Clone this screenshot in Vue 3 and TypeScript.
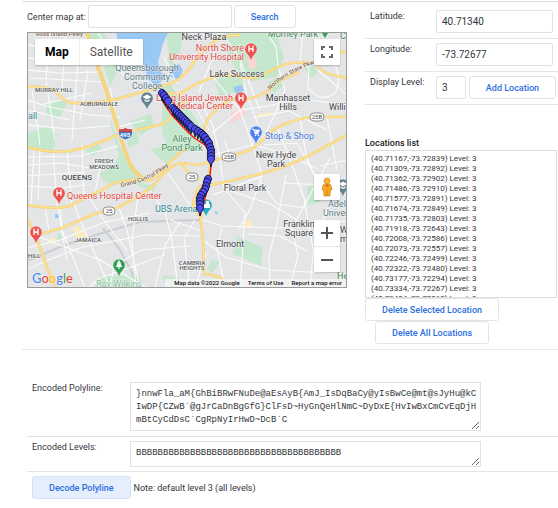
<script setup lang="ts">
import { ref } from 'vue'

interface MapLabel {
  text: string
  x: number
  y: number
  kind: string
  anchor?: 'start' | 'middle' | 'end'
}

const centerAt = ref('')
const latitude = ref('40.71340')
const longitude = ref('-73.72677')
const level = ref('3')
const selected = ref<string[]>([])
const encoded = ref(
  '}nnwFla_aM{GhBiBRwFNuDe@aEsAyB{AmJ_IsDqBaCy@yIsBwCe@mt@sJyHu@kCIwDP{CZwB`@gJrCaDnBgGfG}ClFsD~HyGnQeHlNmC~DyDxE{HvIwBxCmCvEqDjHmBtCyCdDsC`CgRpNyIrHwD~DcB`C',
)
const levels = ref('B'.repeat(38))

const locations = ref<string[]>([
  '40.71167,-73.72839',
  '40.71309,-73.72892',
  '40.71362,-73.72902',
  '40.71486,-73.72910',
  '40.71577,-73.72891',
  '40.71674,-73.72849',
  '40.71735,-73.72803',
  '40.71918,-73.72643',
  '40.72008,-73.72586',
  '40.72073,-73.72557',
  '40.72246,-73.72499',
  '40.72322,-73.72480',
  '40.73177,-73.72294',
  '40.73334,-73.72267',
  '40.73404,-73.72262',
])

function addLocation() {
  locations.value.push(`${latitude.value},${longitude.value}`)
}
function deleteSelected() {
  locations.value = locations.value.filter((l) => !selected.value.includes(l))
}
function deleteAll() {
  locations.value = []
}

const labels: MapLabel[] = [
  { text: 'Ross Island Pkwy', x: 36, y: 36, kind: 'road' },
  { text: 'Queensborough', x: 147, y: 71, kind: 'slate', anchor: 'middle' },
  { text: 'Community', x: 147, y: 80, kind: 'slate', anchor: 'middle' },
  { text: 'College', x: 147, y: 89, kind: 'slate', anchor: 'middle' },
  { text: 'MURRAY HILL', x: 54, y: 92, kind: 'area', anchor: 'middle' },
  { text: 'AUBURNDALE', x: 99, y: 106, kind: 'area', anchor: 'middle' },
  { text: 'all', x: 28, y: 119, kind: 'teal' },
  { text: 'Alley', x: 182, y: 142, kind: 'green', anchor: 'middle' },
  { text: 'Pond Park', x: 182, y: 151, kind: 'green', anchor: 'middle' },
  { text: 'Neck Plaza', x: 204, y: 40, kind: 'town', anchor: 'middle' },
  { text: 'North Shore', x: 244, y: 51, kind: 'red', anchor: 'end' },
  { text: 'University Hospital', x: 244, y: 60, kind: 'red', anchor: 'end' },
  { text: 'Lake Success', x: 237, y: 77, kind: 'town', anchor: 'middle' },
  { text: 'Morney Park', x: 293, y: 37, kind: 'green', anchor: 'middle' },
  { text: 'C', x: 340, y: 39, kind: 'green' },
  { text: 'Long Island Jewish', x: 233, y: 101, kind: 'red', anchor: 'end' },
  { text: 'Medical Center', x: 233, y: 109, kind: 'red', anchor: 'end' },
  { text: 'Manhasset', x: 288, y: 101, kind: 'town', anchor: 'middle' },
  { text: 'Hills', x: 288, y: 110, kind: 'town', anchor: 'middle' },
  { text: 'Willi', x: 329, y: 110, kind: 'town' },
  { text: 'Stop & Shop', x: 265, y: 139, kind: 'blue' },
  { text: 'FRESH', x: 104, y: 163, kind: 'area', anchor: 'middle' },
  { text: 'MEADOWS', x: 104, y: 169, kind: 'area', anchor: 'middle' },
  { text: 'QUEENS', x: 77, y: 180, kind: 'borough', anchor: 'middle' },
  { text: 'Queens Hospital Center', x: 67, y: 199, kind: 'red' },
  { text: 'HOLLIS', x: 138, y: 221, kind: 'area', anchor: 'middle' },
  { text: 'JAMAICA', x: 88, y: 242, kind: 'area', anchor: 'middle' },
  { text: 'UBS Arena', x: 155, y: 212, kind: 'teal' },
  { text: 'HILL', x: 28, y: 258, kind: 'area' },
  { text: 'CAMBRIA', x: 192, y: 265, kind: 'area', anchor: 'middle' },
  { text: 'HEIGHTS', x: 192, y: 270, kind: 'area', anchor: 'middle' },
  { text: 'Roy Wilkins', x: 119, y: 287, kind: 'faint', anchor: 'middle' },
  { text: 'New Hyde', x: 276, y: 158, kind: 'town', anchor: 'middle' },
  { text: 'Park', x: 276, y: 167, kind: 'town', anchor: 'middle' },
  { text: 'Floral Park', x: 245, y: 191, kind: 'town', anchor: 'middle' },
  { text: 'Franklin', x: 299, y: 227, kind: 'town', anchor: 'middle' },
  { text: 'Square', x: 299, y: 236, kind: 'town', anchor: 'middle' },
  { text: 'Elmont', x: 230, y: 247, kind: 'town', anchor: 'middle' },
  { text: 'Adelphi', x: 328, y: 207, kind: 'slate' },
  { text: 'University', x: 323, y: 216, kind: 'slate' },
  { text: 'West', x: 340, y: 233, kind: 'town' },
  { text: 'mpstead', x: 340, y: 242, kind: 'town' },
  { text: 'He', x: 337, y: 279, kind: 'green' },
]

const highways = [
  'M27 87 Q43 86 54 90 Q61 99 70 103 Q95 104 117 99 L160 87 Q172 84 179 79 Q188 72 194 62 Q202 50 214 42 Q223 35 240 35',
  'M27 147 Q48 153 70 151 Q92 147 117 135 Q138 129 160 125 Q170 121 176 110 L190 98',
  'M166 93 L180 94 Q192 85 204 81 Q218 73 234 76 Q250 80 262 76 Q278 65 292 63 L314 62 Q330 58 347 50',
  'M204 130 Q206 118 214 112 Q226 98 240 99 Q254 99 262 94 Q272 90 276 82 L300 72',
  'M347 78 Q322 74 318 66',
  'M211 161 L229 157 L250 150 Q260 144 270 132 Q286 121 310 117 L347 117',
  'M210 185 L230 181 L260 174 Q290 166 310 155 L347 135',
  'M27 205 Q57 210 70 206 Q88 196 100 191 L112 184 Q130 178 150 180 Q162 174 170 162 L184 149',
  'M36 235 L62 228 L94 214 L117 208 L130 201 Q150 191 160 178 Q169 166 180 163 L200 165 L211 161',
  'M180 163 L190 174 L200 180',
  'M27 218 L38 242 L48 270 L56 288',
  'M200 214 L203 240 L204 274 Q218 274 230 285',
  'M211 160 L208 180 L197 190 L193 205 L200 217',
]

const expressway = 'M87 32 L95 59 L107 92 L119 132 Q125 152 130 164 Q137 176 147 181'

const streets = [
  'M27 45 L75 50 L110 57 M50 32 L46 80 L55 140 M66 32 L62 90 M27 70 L60 73 L100 72 M27 100 L50 107 L90 115 L120 117 M32 90 L40 145 M78 60 L72 140 M88 70 L80 120 M27 125 L70 129 L110 126 M27 58 L100 64 M44 104 L92 93 M98 32 L112 59 L127 80 M110 88 L118 127 L145 120 M102 66 L140 60 M30 78 L105 82 M27 110 L70 120',
  'M27 165 L60 163 L90 168 L120 166 M40 150 L38 200 M53 151 L57 204 L67 260 M67 150 L72 205 M82 145 L84 200 M27 186 L60 188 L85 185 M100 168 L94 197 M27 176 L85 172 M118 205 L127 230 L140 288 M138 197 L132 240 L136 288 M150 190 L165 212 L172 240 L178 288 M168 173 L190 205 M27 157 L80 156 L118 146 M34 150 L31 205',
  'M27 232 L60 245 L100 260 L147 288 M45 205 L49 232 M60 207 L62 230 L85 288 M74 203 L80 220 L110 288 M90 198 L100 215 L128 252 M27 270 L45 261 L83 247 L145 235 L200 236 M110 288 L114 266 L141 250 L190 246 M88 288 L100 278 L165 255 M155 288 L165 245 L181 221 M27 248 L60 240 L105 222 L150 213',
  'M200 100 L213 126 L219 154 L224 188 L245 213 L240 288 M212 76 L240 110 L254 149 L262 176 L251 207 L239 230 M240 63 L247 96 L258 124 M214 55 L199 92 M176 92 L194 105 L209 130 M164 57 L177 84',
  'M212 133 L240 110 L268 106 L300 99 L347 105 M277 127 L288 154 L304 198 L314 255 M300 118 L306 155 L316 180 M266 32 L276 47 L278 66 L285 90 L276 112 L262 140 M303 32 L300 63 M309 65 L308 88 Q320 103 334 94 Q343 83 334 62 M227 40 L240 60 L260 110',
  'M200 219 L222 226 L276 228 L347 221 M203 240 L225 257 L270 270 L347 274 M228 190 L270 204 L297 220 M258 178 L277 204 L306 208 M270 288 L269 255 L276 229 L286 175 M290 288 L298 255 L292 228 L330 158 M310 288 L314 245 L330 202 L347 180 M206 253 L195 288 M248 234 L280 236 L307 251 M222 226 L217 249 L225 288',
  'M253 118 L289 111 L327 130 M264 145 L297 143 L318 181 M216 154 L252 145 L281 152 L318 169 M318 70 L347 95 M327 117 L337 170 M195 220 L184 238 L190 288 M170 220 L202 231 M213 195 L262 176 M225 140 L229 155 M320 166 L347 160 M284 183 L347 186',
]

const hospitals = [
  { x: 251, y: 49 },
  { x: 241, y: 98 },
  { x: 59, y: 193 },
  { x: 36, y: 232 },
]

const shields = [
  { text: '25B', x: 317, y: 117 },
  { text: '25B', x: 229, y: 157 },
  { text: '25', x: 192, y: 177 },
  { text: '25', x: 109, y: 211 },
]

const pins: [number, number][] = [
  [162, 93], [164, 95], [166, 98], [168, 101], [173, 108], [175, 110], [177, 112],
  [179, 114], [181, 116], [183, 118], [185, 120], [187, 122], [189, 124], [191, 126],
  [195, 129], [198, 131], [201, 133], [203, 135], [205, 137], [207, 140], [209, 143],
  [210, 147], [211, 150], [211, 153], [211, 156], [211, 159], [208, 179], [207, 182],
  [206, 186], [205, 189], [203, 192], [201, 195], [200, 198], [200, 201], [200, 204], [200, 208],
]
</script>

<template>
  <main class="page">
    <section class="editor">
      <div class="map-side">
        <form class="center-row" @submit.prevent>
          <label for="center">Center map at:</label>
          <input id="center" v-model="centerAt" class="field" type="text" />
          <button class="btn search" type="submit">Search</button>
        </form>

        <div class="map">
          <svg class="canvas" viewBox="28 33 318 254" preserveAspectRatio="xMidYMid slice" role="img" aria-label="Map">
            <rect x="27" y="32" width="321" height="257" fill="#e4e5e6" />
            <g fill="#c4e7cd">
              <path d="M83 32h20l12 20 3 18-8 16-9-28zM166 32h17l-2 18-8 10-5-10zM226 32h50l8 25-7 20-25 4-17-13-8-17zM162 88l8-6 8 15 13 14 8 14 10 13-8 8-14 6-17-1-8-18zM214 80l20-6 12 7-10 11-16 4zM111 119l4 15 12 29 18 22 12-1-5 9-20-11-26 1-7-10 14-6 6-12-8-29zM268 82l13-6 4 8-11 10zM27 134l20-8 10 8-4 17-26-4z" />
              <path d="M237 236l26 12-2 18-28-12zM307 186l13-1v17l-12 3zM46 105l16-6 5 5-8 14-12-1zM85 150l14-6 3 6-10 6zM130 121l21-7 3 13-14 8zM57 233l6 1v6l-6 1zM99 276l41-1 2 12H99zM212 260l8 1-7 12-6-4zM163 276l17 1-4 6-12-1zM304 68l10-3 4 8-8 5zM150 149l24-5 9 7-17 13zM124 132l12-3 3 13-10 6z" />
            </g>
            <g fill="#9ac8f5">
              <path d="M116 32h52l-5 12-5 18 6 17-8 7-8-7-4-14-14-8-11-10z" />
              <path d="M171 69l8-5 4 6-5 11-8-5zM233 87l9-2 2 6-8 3zM55 214h4v4h-4zM214 211l4 1-2 3z" />
            </g>
            <path d="M173 32l5 8-8 19 3 8" fill="none" stroke="#c4e7cd" stroke-width="4" />
            <g fill="#f9d5d3">
              <path d="M247 57l8 1 2 8-7 4zM231 113l12-5 3 6-15 10z" />
            </g>
            <g fill="#faebc0">
              <circle cx="249" cy="224" r="4" />
              <path d="M72 228l5-3 8 8 4 9-10 2zM257 114l16-2v3l-15 2zM50 237l5 1 1 6-6-1z" />
            </g>
            <path d="M27 261L65 245 105 232 140 222 200 220M103 228l17 22 20 38" fill="none" stroke="#cbcdd0" stroke-width="2" />
            <g class="streets"><path v-for="(d, i) in streets" :key="i" :d="d" /></g>
            <g class="road-edge">
              <path v-for="(d, i) in highways" :key="i" :d="d" />
              <path class="wide" :d="expressway" />
            </g>
            <g class="road-fill">
              <path v-for="(d, i) in highways" :key="i" :d="d" />
              <path class="wide" :d="expressway" />
            </g>

            <path id="grand-central" d="M121 187 Q152 182 174 161" fill="none" />
            <path id="northern-state" d="M270 90 Q286 73 322 61" fill="none" />
            <text class="road"><textPath href="#grand-central">Grand Central Pkwy</textPath></text>
            <text class="road"><textPath href="#northern-state">Northern State Pkwy</textPath></text>

            <text
              v-for="l in labels"
              :key="l.text + l.y"
              :x="l.x"
              :y="l.y"
              :text-anchor="l.anchor ?? 'start'"
              :class="l.kind"
            >{{ l.text }}</text>

            <g v-for="s in shields" :key="s.x">
              <rect :x="s.x - (s.text.length > 2 ? 7 : 6)" :y="s.y - 4" :width="s.text.length > 2 ? 14 : 12" height="8" rx="4" fill="#fff" stroke="#777" stroke-width=".8" />
              <text :x="s.x" :y="s.y + 2" text-anchor="middle" class="shield">{{ s.text }}</text>
            </g>
            <g>
              <path d="M119 129q3 1 6.500-1 3.500 2 6.500 1 3 8-6.500 11-9.500-3-6.500-11z" fill="#3f74c7" stroke="#fff" stroke-width=".7" />
              <path d="M119 129q3 1 6.500-1 3.500 2 6.500 1v3h-13z" fill="#d2454b" />
              <text x="125" y="137" text-anchor="middle" class="interstate">495</text>
            </g>

            <g v-for="h in hospitals" :key="h.x" :transform="`translate(${h.x} ${h.y})`">
              <path class="drop" d="M0 12Q-1 8-4 5A6.200 6.200 0 1 1 4 5Q1 8 0 12z" fill="#ea5350" />
              <path d="M-2-3.500V3M2-3.500V3M-2 0H2" fill="none" stroke="#fff" stroke-width="1.300" />
            </g>
            <g transform="translate(256 132)">
              <path class="drop" d="M0 13Q-1 8-4 5A6.200 6.200 0 1 1 4 5Q1 8 0 13z" fill="#4a80f0" />
              <path d="M-4-3h1.500l1.500 5h4M-2-2h5.500l-1 2.500h-4" fill="#fff" stroke="#fff" stroke-width=".8" />
              <circle cx="-.5" cy="3.500" r=".8" fill="#fff" /><circle cx="2.500" cy="3.500" r=".8" fill="#fff" />
            </g>
            <g v-for="c in [{ x: 147, y: 98 }, { x: 343, y: 185 }]" :key="c.x" :transform="`translate(${c.x} ${c.y})`">
              <path class="drop" d="M0 12Q-1 8-4 5A6.200 6.200 0 1 1 4 5Q1 8 0 12z" fill="#63808f" />
              <path d="M-4.500-1L0-3.500 4.500-1 0 1.500zM-2.500 1.300L0 2.700l2.500-1.400V3L0 4-2.500 3z" fill="#fff" />
            </g>
            <g transform="translate(119 265)">
              <path class="drop" d="M0 12Q-1 8-4 5A6.200 6.200 0 1 1 4 5Q1 8 0 12z" fill="#32a053" />
              <path d="M0-5L2.200-1.500H1.400L3.200 2H.6V4H-.6V2H-3.200L-1.400-1.500H-2.200z" fill="#fff" />
            </g>
            <path d="M325 38l-3-5h6z" fill="#32a053" />
            <g transform="translate(206 205)">
              <path class="drop" d="M0 12Q-1 8-4 5A6.200 6.200 0 1 1 4 5Q1 8 0 12z" fill="#27a9bd" />
              <path d="M-2-1H4V3H-2zM0-4H3V-1H0z" fill="#fff" />
            </g>

            <path d="M162 100L167 108 172 115 183 127 193 137 205 145 209 151 211 166 209 184 205 198 200 216" fill="none" stroke="#f01c12" stroke-width="1.500" />
            <g v-for="(p, i) in pins" :key="i" :transform="`translate(${p[0]} ${p[1]})`">
              <path d="M0 8Q-.5 4-2.500 2.500A3.600 3.600 0 1 1 2.500 2.500Q.5 4 0 8z" fill="#4b4bf2" stroke="#101030" stroke-width=".9" />
            </g>
            <rect x="165" y="279" width="183" height="9" fill="#f5f5f5" opacity=".75" />
          </svg>

          <div class="map-types">
            <button class="map-type active" type="button">Map</button>
            <button class="map-type" type="button">Satellite</button>
          </div>
          <button class="tile fullscreen" type="button" aria-label="Fullscreen">
            <svg viewBox="0 0 12 12" width="12" height="12"><path d="M1 4V1H4M8 1H11V4M11 8V11H8M4 11H1V8" fill="none" stroke="#666" stroke-width="2" /></svg>
          </button>
          <button class="tile pegman" type="button" aria-label="Street View">
            <svg viewBox="0 0 14 20" width="14" height="20">
              <path d="M3 8Q7 6 11 8L12 13H10.500L10 19H4L3.500 13H2z" fill="#f5a623" stroke="#c98214" stroke-width=".6" />
              <path d="M5 8L7 10 9 8" fill="#e0552c" />
              <path d="M7 13V19" stroke="#c98214" stroke-width=".8" />
              <circle cx="7" cy="4" r="3" fill="#f9b233" stroke="#c98214" stroke-width=".6" />
            </svg>
          </button>
          <div class="zoom">
            <button type="button" aria-label="Zoom in"><svg viewBox="0 0 12 12" width="12" height="12"><path d="M0 6H12M6 0V12" stroke="#555" stroke-width="2" /></svg></button>
            <button type="button" aria-label="Zoom out"><svg viewBox="0 0 12 12" width="12" height="12"><path d="M0 6H12" stroke="#555" stroke-width="2" /></svg></button>
          </div>
          <a class="logo" href="#"><span class="b">G</span><span class="r">o</span><span class="y">o</span><span class="b">g</span><span class="g">l</span><span class="r">e</span></a>
          <div class="credits">
            <span>Map data ©2022 Google</span>
            <a href="#">Terms of Use</a>
            <a href="#">Report a map error</a>
          </div>
        </div>
      </div>

      <div class="point-side">
        <form @submit.prevent="addLocation">
          <div class="point-row">
            <label for="lat">Latitude:</label>
            <input id="lat" v-model="latitude" class="field" type="text" />
          </div>
          <div class="point-row">
            <label for="lng">Longitude:</label>
            <input id="lng" v-model="longitude" class="field" type="text" />
          </div>
          <div class="point-row">
            <label for="level">Display Level:</label>
            <div class="level-group">
              <input id="level" v-model="level" class="field level" type="text" />
              <button class="btn add" type="submit">Add Location</button>
            </div>
          </div>
        </form>

        <label class="list-title" for="list">Locations list</label>
        <select id="list" v-model="selected" class="list" multiple>
          <option v-for="(l, i) in locations" :key="i" :value="l">({{ l }}) Level: 3</option>
        </select>
        <div class="list-actions">
          <button class="btn" type="button" @click="deleteSelected">Delete Selected Location</button>
          <button class="btn all" type="button" @click="deleteAll">Delete All Locations</button>
        </div>
      </div>
    </section>

    <section class="encoding">
      <div class="code-row">
        <label for="polyline">Encoded Polyline:</label>
        <textarea id="polyline" v-model="encoded" class="code tall" spellcheck="false"></textarea>
      </div>
      <div class="code-row">
        <label for="levels">Encoded Levels:</label>
        <textarea id="levels" v-model="levels" class="code" spellcheck="false"></textarea>
      </div>
      <div class="decode-row">
        <button class="btn primary" type="button">Decode Polyline</button>
        <span>Note: default level 3 (all levels)</span>
      </div>
    </section>
  </main>
</template>

<style>
body {
  background: #fff;
}
</style>

<style scoped>
.page,
.page * {
  box-sizing: border-box;
}
.page {
  padding: 1px 0 0 22px;
  font: 9px/12px Roboto, 'Liberation Sans', sans-serif;
  color: #33363a;
}
.editor {
  display: grid;
  grid-template-columns: 338fr 193fr;
  padding-left: 5px;
  padding-bottom: 5px;
  border-top: 1px solid #dcdee0;
  border-bottom: 1px solid #e4e6e8;
}
.map-side {
  padding: 3px 18px 0 0;
}
.center-row {
  display: flex;
  align-items: center;
  gap: 2px;
  margin-bottom: 4px;
}
.field {
  height: 23px;
  min-width: 0;
  margin: 0;
  padding: 0 5px;
  border: 1px solid #dfe1e5;
  border-radius: 2px;
  background: #fff;
  color: #33363a;
  font: 10px/12px Roboto, 'Liberation Sans', sans-serif;
}
.center-row .field {
  width: 45%;
}
.btn {
  height: 23px;
  padding: 0 16px;
  border: 1px solid #e2e4e8;
  border-radius: 3px;
  background: #fff;
  color: #2b6fdf;
  font: 500 9px/12px Roboto, 'Liberation Sans', sans-serif;
  white-space: nowrap;
}
.map {
  position: relative;
  aspect-ratio: 320 / 256;
  overflow: hidden;
  border: 1px solid #9a9a9a;
}
.canvas {
  display: block;
  width: 100%;
  height: 100%;
}
.canvas text {
  font: 9px Roboto, 'Liberation Sans', sans-serif;
  paint-order: stroke;
  stroke: rgba(255, 255, 255, 0.7);
  stroke-width: 1px;
  stroke-linejoin: round;
}
.streets path {
  fill: none;
  stroke: #fcfcfc;
  stroke-width: 1.1px;
}
.road-edge path {
  fill: none;
  stroke: #f5cb6c;
  stroke-width: 2.6px;
}
.road-edge .wide {
  stroke-width: 3.6px;
}
.road-fill path {
  fill: none;
  stroke: #fde293;
  stroke-width: 1.6px;
}
.road-fill .wide {
  stroke: #f9d67b;
  stroke-width: 2.4px;
}
.drop {
  stroke: #fff;
  stroke-width: 0.5px;
}
.canvas .town { fill: #3c4043; }
.canvas .slate { fill: #5d7886; }
.canvas .red { fill: #df4340; }
.canvas .green { fill: #37874f; }
.canvas .faint { fill: #8cba9b; }
.canvas .blue { fill: #4577dc; }
.canvas .teal { fill: #2a8793; }
.canvas .area { fill: #55595d; font-size: 6px; font-weight: 500; }
.canvas .borough { fill: #45494d; font-size: 8px; font-weight: 500; }
.canvas .road { fill: #7d6148; font-size: 6px; font-weight: 500; }
.canvas .shield { fill: #444; font-size: 6px; stroke: none; }
.canvas .interstate { fill: #fff; font-size: 6px; font-weight: 700; stroke: none; }

.map-types {
  position: absolute;
  top: 6px;
  left: 7px;
  display: flex;
  background: #fff;
  border-radius: 1px;
  box-shadow: 0 1px 2px rgba(0, 0, 0, 0.25);
}
.map-type {
  height: 26px;
  padding: 0 10px;
  border: 0;
  background: none;
  color: #565656;
  font: 12px/14px Roboto, 'Liberation Sans', sans-serif;
}
.map-type + .map-type {
  border-left: 1px solid #ececec;
}
.map-type.active {
  color: #000;
  font-weight: 700;
}
.tile,
.zoom {
  position: absolute;
  right: 6px;
  width: 26px;
  background: #fff;
  border: 0;
  border-radius: 1px;
  box-shadow: 0 1px 2px rgba(0, 0, 0, 0.25);
}
.tile {
  display: grid;
  place-items: center;
  height: 26px;
  padding: 0;
}
.fullscreen {
  top: 6px;
}
.pegman {
  bottom: 87px;
}
.zoom {
  bottom: 15px;
}
.zoom button {
  display: grid;
  place-items: center;
  width: 100%;
  height: 26px;
  padding: 0;
  border: 0;
  background: none;
}
.zoom button + button {
  border-top: 1px solid #e6e6e6;
}
.logo {
  position: absolute;
  left: 4px;
  bottom: 1px;
  font: 500 13px/15px Lato, Roboto, sans-serif;
  text-decoration: none;
  text-shadow: 0 0 1px #fff, 0 0 1px #fff;
}
.b { color: #4285f4; }
.r { color: #ea4335; }
.y { color: #fbbc05; }
.g { color: #34a853; }
.credits {
  position: absolute;
  right: 4px;
  bottom: 0;
  display: flex;
  gap: 8px;
  font-size: 6px;
  font-weight: 500;
  line-height: 8px;
  color: #111;
}
.credits a {
  color: inherit;
  text-decoration: none;
}

.point-row {
  display: grid;
  grid-template-columns: 66px 1fr;
  height: 33px;
  padding: 4px 5px 0;
  border-bottom: 1px solid #e2e4e6;
}
.point-row:first-child {
  height: 37px;
  padding-top: 8px;
}
.level-group {
  display: flex;
  gap: 3px;
  margin-right: -3px;
}
.field.level {
  width: 30px;
}
.add {
  flex: 1;
  padding: 0;
}
.list-title {
  display: block;
  margin-top: 32px;
  font-weight: 500;
  color: #202124;
}
.list {
  display: block;
  width: calc(100% - 1px);
  height: 148px;
  margin-top: 1px;
  padding: 3px 3px 0;
  border: 1px solid #dadce0;
  border-radius: 0;
  background: #fff;
  color: #33363a;
  font: 8px/10px Roboto, 'Liberation Sans', sans-serif;
  overflow: hidden;
}
.list option {
  min-height: 10px;
  padding: 0 2px;
}
.list-actions {
  display: flex;
  flex-direction: column;
  align-items: flex-start;
}
.list-actions .all {
  margin-left: 10px;
}

.encoding {
  padding: 32px 0 0 5px;
}
.code-row {
  display: grid;
  grid-template-columns: 98px 1fr;
  padding: 0 0 5px 5px;
  border-bottom: 1px solid #e2e4e6;
}
.code-row + .code-row {
  padding-top: 4px;
  padding-bottom: 4px;
}
.code {
  display: block;
  width: 82%;
  height: 26px;
  margin: 0;
  padding: 5px 2px 5px 5px;
  border: 1px solid #dfe1e5;
  border-radius: 0;
  color: #33363a;
  font: 9px/13px 'Liberation Mono', monospace;
  word-break: break-all;
  overflow: hidden;
  resize: both;
}
.code.tall {
  height: 49px;
}
.decode-row {
  display: flex;
  align-items: center;
  gap: 3px;
  padding: 4px 0 8px 5px;
}
.btn.primary {
  border-color: #d3e2fb;
  background: #e5eefd;
}
</style>
